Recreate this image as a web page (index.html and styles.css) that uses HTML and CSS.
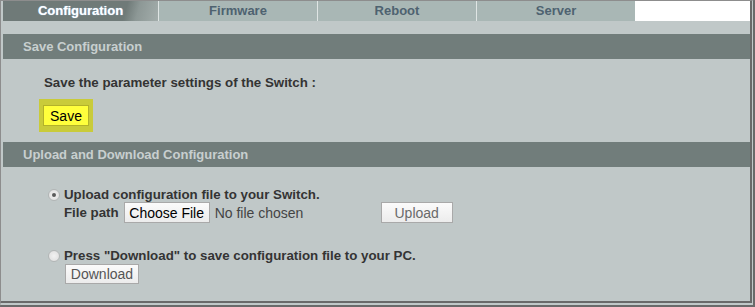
FILE: index.html
```html
<!DOCTYPE html>
<html lang="en">
<head>
  <meta charset="UTF-8">
  <title>Configuration</title>
  <link rel="stylesheet" href="styles.css">
</head>
<body>

<div class="frame">
  <div class="tabs">
    <a class="tab active" href="#">Configuration</a>
    <a class="tab" href="#">Firmware</a>
    <a class="tab" href="#">Reboot</a>
    <a class="tab" href="#">Server</a>
  </div>
  <div class="strip"></div>

  <div class="panel">
    <div class="panel-title">Save Configuration</div>
    <div class="panel-body save-body">
      <p class="lead">Save the parameter settings of the Switch :</p>
      <span class="highlight"><button class="btn btn-save">Save</button></span>
    </div>
  </div>

  <div class="panel">
    <div class="panel-title">Upload and Download Configuration</div>
    <div class="panel-body transfer-body">
      <div class="option">
        <label class="option-label"><span class="radio checked"></span>Upload configuration file to your Switch.</label>
        <div class="option-row">
          <span class="field-name">File path</span>
          <button class="btn btn-file">Choose File</button>
          <span class="file-status">No file chosen</span>
          <button class="btn btn-muted btn-upload">Upload</button>
        </div>
      </div>
      <div class="option option-second">
        <label class="option-label"><span class="radio"></span>Press "Download" to save configuration file to your PC.</label>
        <div class="option-row">
          <button class="btn btn-muted btn-download">Download</button>
        </div>
      </div>
    </div>
  </div>
</div>

</body>
</html>
```

FILE: styles.css
```css
/* General Styling */
html, body {
  margin: 0;
  background: #ffffff;
}
body {
  font-family: "Liberation Sans", Arial, sans-serif;
  font-size: 13px;
  color: #333333;
}
.frame {
  width: 755px;
  height: 307px;
  box-sizing: border-box;
  border-top: 1px solid #8d8d8d;
  border-left: 1px solid #8d8d8d;
  border-right: 5px double #6a6a6a;
  border-bottom: 6px double #6a6a6a;
  padding-left: 2px;
  background: #c0c8c8;
  display: flex;
  flex-direction: column;
}

/* Tabs */
.tabs {
  display: flex;
  height: 20px;
  background: #ffffff;
}
.tab {
  width: 158px;
  border-left: 1px solid #dfe5e4;
  background: #a9b7b5;
  color: #4e6270;
  font-weight: bold;
  font-size: 13px;
  line-height: 20px;
  text-align: center;
  text-decoration: none;
}
.tab.active {
  width: 155px;
  border-left: none;
  color: #ffffff;
  text-shadow: 0 0 1px #a8d4ff;
  background: linear-gradient(105deg, #6f7a78 0%, #6f7a78 78%, #8d9896 86%, #a3adab 100%);
}
.strip {
  height: 13px;
  background: #c0c8c8;
}

/* Panels */
.panel-title {
  height: 25px;
  line-height: 25px;
  padding-left: 20px;
  background: #717d7b;
  color: #c8cfcf;
  font-weight: bold;
  font-size: 13px;
}
.panel-body {
  background: #c0c8c8;
}
.save-body {
  height: 83px;
  box-sizing: border-box;
  padding: 16px 0 0 36px;
}
.lead {
  margin: 0 0 8px 5px;
  line-height: 16px;
  font-size: 13.3px;
  font-weight: bold;
  color: #343434;
}
.highlight {
  display: inline-block;
  padding: 6px 4px;
  background: #c9cb3a;
}
.btn {
  font-family: "Liberation Sans", Arial, sans-serif;
  font-size: 14px;
  margin: 0;
  border: 1px solid #a9a9a9;
  background: linear-gradient(#fbfbfb, #ececec);
  color: #111111;
  cursor: pointer;
}
.btn-save {
  width: 46px;
  height: 21px;
  padding: 0;
  background: #ffff3c;
  border-color: #b3b22a;
  color: #000000;
}

/* Upload / Download */
.transfer-body {
  flex: 1;
  padding: 20px 0 0 45px;
  font-size: 13.3px;
}
.option-label {
  display: flex;
  align-items: center;
  height: 15px;
  font-weight: bold;
  color: #343434;
}
.radio {
  width: 10px;
  height: 10px;
  margin-right: 4px;
  border: 1px solid #b2b6b6;
  border-radius: 50%;
  background: radial-gradient(circle, #f2f2f2 0%, #dcdcdc 100%);
  display: flex;
  align-items: center;
  justify-content: center;
}
.radio.checked::after {
  content: "";
  width: 4px;
  height: 4px;
  border-radius: 50%;
  background: #5a5a5a;
}
.option-row {
  display: flex;
  align-items: center;
  padding-left: 16px;
}
.field-name {
  font-weight: bold;
  color: #343434;
  margin-right: 5px;
}
.btn-file {
  width: 86px;
  height: 21px;
  padding: 0;
  color: #000000;
}
.file-status {
  margin-left: 5px;
  width: 166px;
  color: #444444;
  font-size: 14px;
}
.btn-muted {
  color: #6a6a6a;
  padding: 0;
}
.btn-upload {
  width: 72px;
  height: 21px;
}
.option-second {
  margin-top: 25px;
}
.option-second .option-row {
  padding-left: 17px;
  margin-top: 1px;
}
.btn-download {
  width: 74px;
  height: 20px;
  color: #555555;
}
```
